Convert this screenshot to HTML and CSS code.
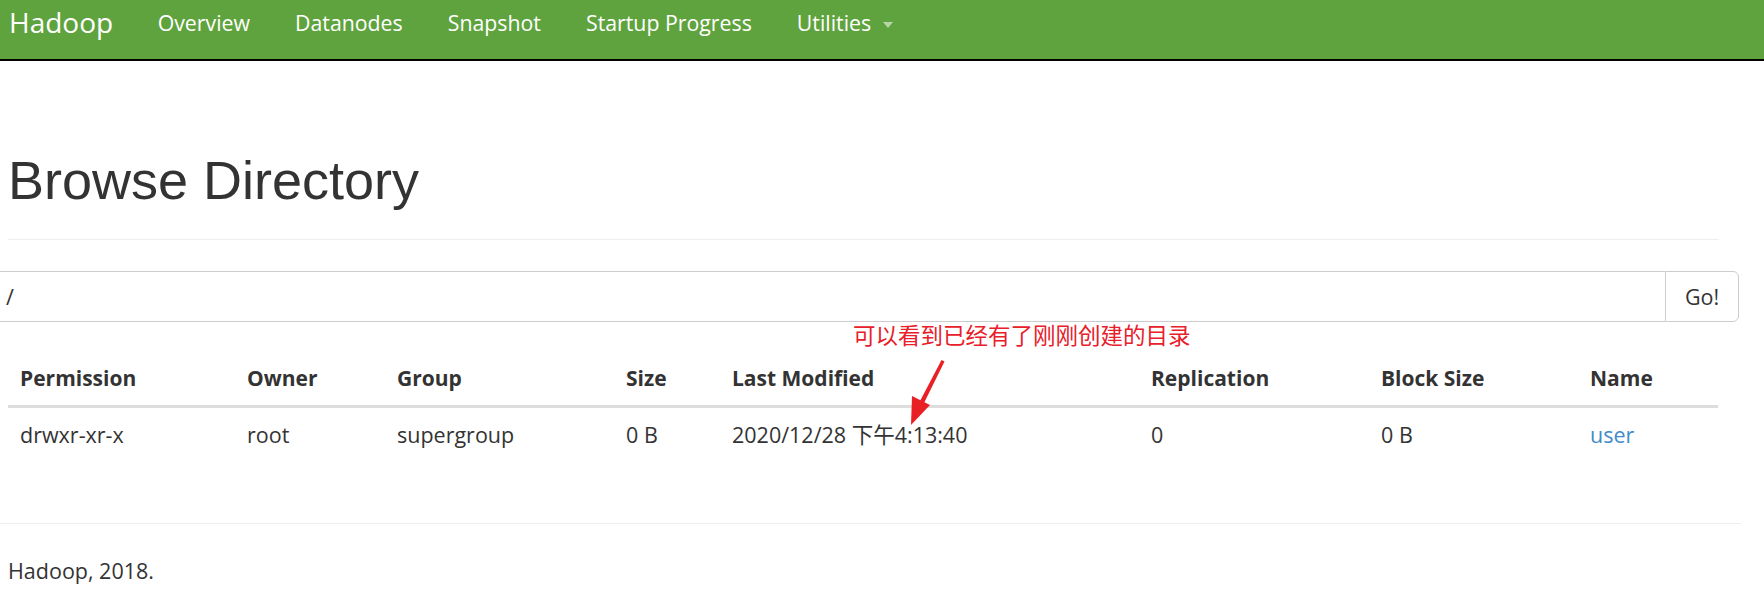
FILE: index.html
```html
<!DOCTYPE html>
<html lang="zh-CN">
<head>
<meta charset="utf-8">
<title>Browsing HDFS</title>
<link rel="stylesheet" href="styles.css">
</head>
<body>
<header class="navbar">
  <a class="brand" href="#">Hadoop</a>
  <ul class="nav">
    <li><a href="#">Overview</a></li>
    <li><a href="#">Datanodes</a></li>
    <li><a href="#">Snapshot</a></li>
    <li><a href="#">Startup Progress</a></li>
    <li><a href="#" class="dropdown">Utilities <span class="caret"></span></a></li>
  </ul>
</header>

<main class="container">
  <div class="page-header">
    <h1>Browse Directory</h1>
  </div>

  <form class="input-group">
    <input class="form-control" type="text" value="/">
    <button class="btn" type="button">Go!</button>
  </form>

  <div class="annotation">可以看到已经有了刚刚创建的目录</div>
  <svg class="arrow" width="50" height="70" viewBox="0 0 50 70">
    <path d="M40.5 2 L43.5 3.5 L22 47 L18 45 Z" fill="#e81f25"/>
    <path d="M11 38 L29 47 L10 67 Z" fill="#e81f25"/>
  </svg>

  <table class="table">
    <colgroup>
      <col class="c1"><col class="c2"><col class="c3"><col class="c4">
      <col class="c5"><col class="c6"><col class="c7"><col class="c8">
    </colgroup>
    <thead>
      <tr>
        <th>Permission</th>
        <th>Owner</th>
        <th>Group</th>
        <th>Size</th>
        <th>Last Modified</th>
        <th>Replication</th>
        <th>Block Size</th>
        <th>Name</th>
      </tr>
    </thead>
    <tbody>
      <tr>
        <td>drwxr-xr-x</td>
        <td>root</td>
        <td>supergroup</td>
        <td>0 B</td>
        <td>2020/12/28 下午4:13:40</td>
        <td>0</td>
        <td>0 B</td>
        <td><a href="#">user</a></td>
      </tr>
    </tbody>
  </table>
</main>

<footer class="footer">
  <p>Hadoop, 2018.</p>
</footer>
</body>
</html>
```

FILE: styles.css
```css
* { box-sizing: border-box; }

body {
  margin: 0;
  font-family: "Open Sans", "Noto Sans CJK SC", sans-serif;
  font-size: 21.5px;
  color: #333;
  background: #fff;
  position: relative;
}

a { text-decoration: none; }

.navbar {
  display: flex;
  align-items: flex-start;
  height: 61px;
  background: #5fa33e;
  border-bottom: 2px solid #000;
  padding: 5px 0 0 9px;
}

.brand {
  color: #fff;
  font-size: 28px;
  line-height: 34px;
  margin-right: 22px;
}

.nav {
  display: flex;
  list-style: none;
  margin: 0;
  padding: 3px 0 0;
}

.nav a {
  display: block;
  color: #fff;
  font-size: 21.3px;
  line-height: 30px;
  padding: 0 22.5px;
}

.caret {
  display: inline-block;
  width: 0;
  height: 0;
  margin-left: 6px;
  vertical-align: middle;
  border-top: 6px solid rgba(255, 255, 255, 0.55);
  border-left: 5px solid transparent;
  border-right: 5px solid transparent;
}

.container {
  margin-left: 8px;
  width: 1711px;
}

.page-header {
  margin-top: 90px;
  padding-bottom: 29px;
  border-bottom: 1px solid #eee;
}

h1 {
  margin: 0;
  font-family: "Liberation Sans", Arial, sans-serif;
  font-weight: 400;
  font-size: 54px;
  line-height: 1.1;
  color: #333;
}

.input-group {
  display: flex;
  margin: 31px -21px 0 -21px;
  width: 1752px;
  height: 51px;
}

.form-control {
  flex: 1;
  height: 51px;
  padding: 0 18px;
  font-family: "Open Sans", sans-serif;
  font-size: 21.5px;
  color: #333;
  border: 1px solid #ccc;
  border-right: 0;
  border-radius: 0;
  outline: none;
}

.btn {
  width: 74px;
  height: 51px;
  background: #fff;
  border: 1px solid #ccc;
  border-radius: 0 6px 6px 0;
  font-family: "Open Sans", sans-serif;
  font-size: 21.5px;
  color: #333;
  padding: 0;
}

.annotation {
  position: absolute;
  left: 853px;
  top: 323px;
  font-family: "Noto Sans CJK SC", sans-serif;
  font-size: 22.5px;
  line-height: 22px;
  color: #e8202a;
  white-space: nowrap;
}

.arrow {
  position: absolute;
  left: 901px;
  top: 358px;
}

.table {
  margin-top: 29px;
  width: 1710px;
  border-collapse: collapse;
  table-layout: fixed;
}

.c1 { width: 227px; }
.c2 { width: 150px; }
.c3 { width: 229px; }
.c4 { width: 106px; }
.c5 { width: 419px; }
.c6 { width: 230px; }
.c7 { width: 209px; }
.c8 { width: 140px; }

.table th,
.table td {
  padding: 12px;
  line-height: 30px;
  text-align: left;
  white-space: nowrap;
}

.table th {
  font-size: 21px;
  font-weight: 700;
  border-bottom: 3px solid #ddd;
}

.table td a { color: #428bca; }

.footer {
  margin-top: 61px;
  width: 1741px;
  border-top: 1px solid #eee;
}

.footer p {
  margin: 33px 0 0 8px;
  line-height: 28px;
}
```
